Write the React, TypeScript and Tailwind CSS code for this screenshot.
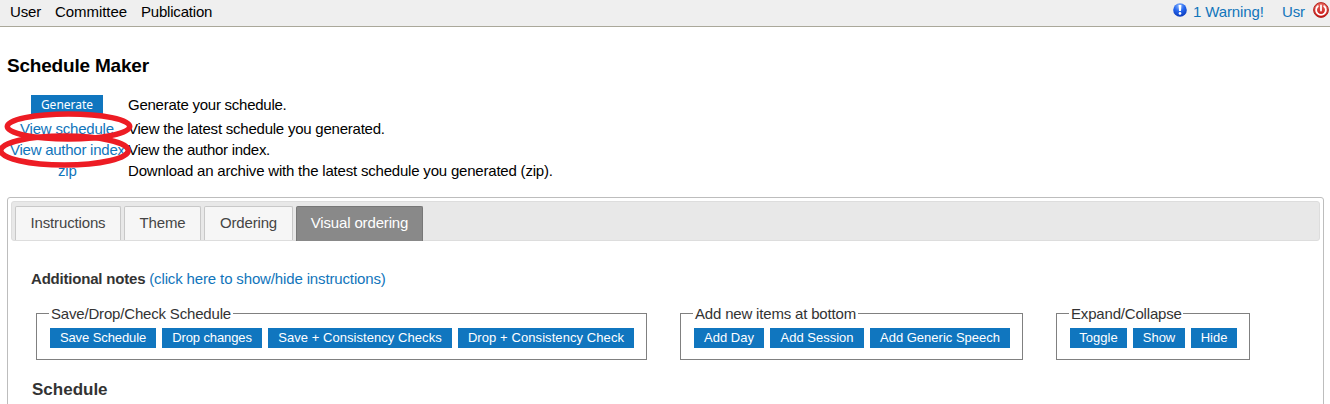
import React from "react";

const links = "text-[#1175bb]";

function Btn({ children, className }: { children: string; className: string }) {
  return (
    <button className={`flex h-5 items-center justify-center whitespace-nowrap bg-[#1076bf] text-[13px] leading-5 text-white ${className}`}>
      {children}
    </button>
  );
}

function Tab({ children, className, active = false }: { children: string; className: string; active?: boolean }) {
  const tone = active
    ? "h-[35px] border-[#777777] bg-[#898989] text-white"
    : "h-[34px] border-[#c8c8c8] bg-[#f6f6f6] text-[#454545]";
  return (
    <li className={`flex justify-center whitespace-nowrap rounded-t-[2px] border border-b-0 pt-[6px] text-[15px] leading-5 tracking-[-0.15px] ${tone} ${className}`}>
      {children}
    </li>
  );
}

function Group({ title, className, titleClass, children }: { title: string; className: string; titleClass: string; children: React.ReactNode }) {
  return (
    <div className={`h-[56px] ${className}`}>
      <fieldset className="h-full border border-[#808080] pl-[13px]">
        <legend className={`-ml-px h-[19px] whitespace-nowrap pl-[2px] text-[15px] leading-[19px] tracking-[-0.18px] ${titleClass}`}>{title}</legend>
        <div className="mt-[5px] flex gap-[6px]">{children}</div>
      </fieldset>
    </div>
  );
}

export default function App() {
  return (
    <div className="h-[404px] w-[1330px] overflow-hidden bg-white font-['Liberation_Sans',Arial,sans-serif] text-[15px] leading-5 text-black">
      <header className="flex h-[27px] justify-between border-b border-[#aaa89a] bg-[#efefef] pl-[10px] pt-[2px] tracking-[-0.12px]">
        <nav className="flex">
          <a className="w-[45px]">User</a>
          <a className="w-[86px] tracking-[-0.05px]">Committee</a>
          <a className="tracking-[-0.2px]">Publication</a>
        </nav>
        <div className={`flex w-[157px] ${links}`}>
          <svg className="h-4 w-[14px]" viewBox="0 0 14 16">
            <defs>
              <radialGradient id="blue" cx="45%" cy="20%" r="85%">
                <stop offset="0" stopColor="#8fbaff" />
                <stop offset=".45" stopColor="#2768ef" />
                <stop offset="1" stopColor="#0633b4" />
              </radialGradient>
            </defs>
            <circle cx="7" cy="8" r="6.8" fill="url(#blue)" />
            <path d="M5.6 3h2.8l-.4 6H6z" fill="#fff" />
            <circle cx="7" cy="11.4" r="1.3" fill="#fff" />
          </svg>
          <a className="ml-[6px] w-[89px] whitespace-nowrap">1 Warning!</a>
          <a className="w-[31px]">Usr</a>
          <svg className="h-4 w-4" viewBox="0 0 16 16">
            <defs>
              <linearGradient id="red" x1="0" y1="0" x2="0" y2="1">
                <stop offset="0" stopColor="#ea6c62" />
                <stop offset="1" stopColor="#c40c0c" />
              </linearGradient>
            </defs>
            <circle cx="8" cy="8" r="7.4" fill="url(#red)" stroke="#b52620" strokeWidth="1" />
            <path d="M4.8 4.2a4.9 4.9 0 1 0 6.4 0M8 3.4v5.2" fill="none" stroke="#fff" strokeWidth="1.8" strokeLinecap="round" />
          </svg>
        </div>
      </header>

      <h1 className="ml-[7px] mt-[28px] h-[22px] text-[19px] font-bold leading-[22px] tracking-[-0.2px]">Schedule Maker</h1>

      <section className="relative mt-[18px] grid h-[92px] grid-cols-[128px_1fr] grid-rows-[24px_21px_21px_21px] tracking-[-0.2px]">
        <button className="ml-[31px] h-5 w-[72px] bg-[#1076bf] font-['Noto_Sans',sans-serif] text-[12px] leading-5 tracking-normal text-white">Generate</button>
        <span className="tracking-[-0.25px]">Generate your schedule.</span>
        <a className={`ml-[20px] whitespace-nowrap tracking-[-0.2px] ${links}`}>View schedule</a>
        <span className="tracking-[-0.23px]">View the latest schedule you generated.</span>
        <a className={`ml-[10px] whitespace-nowrap tracking-[-0.25px] ${links}`}>View author index</a>
        <span className="tracking-[-0.28px]">View the author index.</span>
        <a className={`ml-[58px] ${links}`}>zip</a>
        <span>Download an archive with the latest schedule you generated (zip).</span>
        <svg className="absolute left-0 top-[15px] h-[60px] w-[134px]" viewBox="0 0 134 60" fill="none" stroke="#ed1c24" strokeWidth="5.5">
          <ellipse cx="68.5" cy="16.5" rx="61.2" ry="12.5" />
          <ellipse cx="64.5" cy="40.5" rx="63.8" ry="14.5" />
        </svg>
      </section>

      <main className="ml-[7px] mt-[10px] h-[220px] w-[1317px] rounded-t-[3px] border border-[#bdbdbd] pl-[3px] pt-[3px] text-[#333333]">
        <ul className="flex h-[40px] w-[1309px] gap-[3px] rounded-[3px] border border-[#dddddd] bg-[#e8e8e8] pl-[3px] pt-[4px]">
          <Tab className="w-[106px]">Instructions</Tab>
          <Tab className="w-[77px]">Theme</Tab>
          <Tab className="w-[89px]">Ordering</Tab>
          <Tab active className="w-[127px]">Visual ordering</Tab>
        </ul>
        <p className="ml-[20px] mt-[28px] h-5 whitespace-nowrap tracking-[-0.2px]">
          <strong>Additional notes</strong> <a className={`tracking-[-0.14px] ${links}`}>(click here to show/hide instructions)</a>
        </p>
        <div className="ml-[25px] mt-[15px] flex">
          <Group title="Save/Drop/Check Schedule" className="w-[611px]" titleClass="w-[184px]">
            <Btn className="w-[106px] tracking-[-0.1px]">Save Schedule</Btn>
            <Btn className="w-[100px] tracking-[-0.1px]">Drop changes</Btn>
            <Btn className="w-[184px] tracking-[0.05px]">Save + Consistency Checks</Btn>
            <Btn className="w-[176px] tracking-[0.08px]">Drop + Consistency Check</Btn>
          </Group>
          <Group title="Add new items at bottom" className="ml-[33px] w-[343px]" titleClass="w-[165px]">
            <Btn className="w-[70px]">Add Day</Btn>
            <Btn className="w-[94px]">Add Session</Btn>
            <Btn className="w-[140px]">Add Generic Speech</Btn>
          </Group>
          <Group title="Expand/Collapse" className="ml-[33px] w-[194px]" titleClass="w-[114px]">
            <Btn className="w-[57px]">Toggle</Btn>
            <Btn className="w-[52px]">Show</Btn>
            <Btn className="w-[46px]">Hide</Btn>
          </Group>
        </div>
        <h2 className="ml-[21px] mt-[20px] text-[17px] font-bold leading-5">Schedule</h2>
      </main>
    </div>
  );
}
